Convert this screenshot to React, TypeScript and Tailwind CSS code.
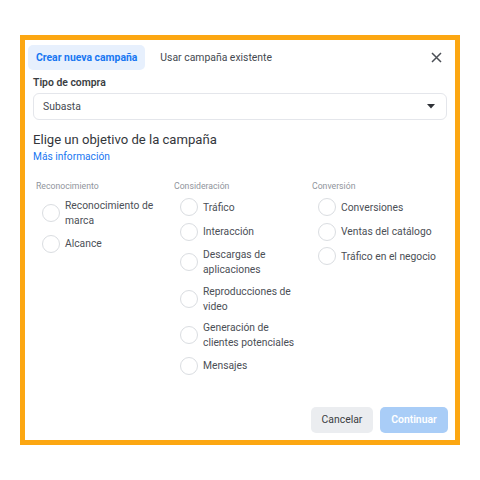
const COLUMNS = [
  {
    title: 'Reconocimiento',
    items: ['Reconocimiento de marca', 'Alcance'],
  },
  {
    title: 'Consideración',
    items: [
      'Tráfico',
      'Interacción',
      'Descargas de aplicaciones',
      'Reproducciones de video',
      'Generación de clientes potenciales',
      'Mensajes',
    ],
  },
  {
    title: 'Conversión',
    items: ['Conversiones', 'Ventas del catálogo', 'Tráfico en el negocio'],
  },
]

export default function App() {
  return (
    <div className="w-[480px] h-[480px] bg-white pt-[35px] pl-[20px]" style={{ fontFamily: 'Roboto, "Liberation Sans", sans-serif' }}>
      <div className="w-[440px] h-[410px] border-[5px] border-[#fca712] bg-white flex flex-col">
        {/* Tabs */}
        <div className="flex items-center pt-[5px] pl-[3px] pr-[12px]">
          <div className="h-[25px] px-[8px] flex items-center rounded-[5px] bg-[#e7f0fd] text-[#1877f2] text-[10.4px] font-bold">
            Crear nueva campaña
          </div>
          <div className="h-[25px] px-[8px] ml-[7px] flex items-center text-[#444950] text-[10.4px]">
            Usar campaña existente
          </div>
          <button className="ml-auto text-[#444] w-[14px] h-[14px] flex items-center justify-center">
            <svg width="11" height="11" viewBox="0 0 11 11" fill="none" stroke="#4b4f56" strokeWidth="1.5">
              <path d="M1 1l9 9M10 1l-9 9" />
            </svg>
          </button>
        </div>

        <div className="px-[8px] flex flex-col flex-1">
          <div className="mt-[6px] text-[10.4px] font-semibold text-[#3a3d42] leading-[14px]">Tipo de compra</div>
          <div className="mt-[3px] h-[27px] border border-[#e4e6eb] rounded-[6px] flex items-center pl-[9px] pr-[11px] text-[10.4px] text-[#444950]">
            Subasta
            <svg className="ml-auto" width="8" height="5" viewBox="0 0 8 5">
              <path d="M0 0h8L4 4.5z" fill="#2f3237" />
            </svg>
          </div>

          <div className="mt-[12px] text-[13.1px] text-[#33363b] leading-[16px]">Elige un objetivo de la campaña</div>
          <div className="mt-[2px] text-[10.2px] text-[#1877f2] leading-[14px]">Más información</div>

          <div className="mt-[16px] grid grid-cols-[138px_138px_138px] pl-[3px]">
            {COLUMNS.map(col => (
              <div key={col.title} className="flex flex-col">
                <div className="text-[8.7px] text-[#90949c] leading-[12px]">{col.title}</div>
                <div className="mt-[6px] flex flex-col gap-[6.5px]">
                  {col.items.map(item => (
                    <div key={item} className="flex items-center">
                      <span className="w-[18px] h-[18px] ml-[6px] shrink-0 rounded-full border border-[#dadde1] bg-white" />
                      <span className="ml-[5px] max-w-[96px] text-[10.3px] leading-[15px] text-[#4b4f56]">{item}</span>
                    </div>
                  ))}
                </div>
              </div>
            ))}
          </div>

          <div className="mt-auto mb-[7px] flex justify-end gap-[7px] -mr-[1px]">
            <button className="h-[26px] w-[62px] rounded-[5px] bg-[#ebedf0] text-[10.4px] text-[#3a3d42]">
              Cancelar
            </button>
            <button className="h-[26px] w-[68px] rounded-[5px] bg-[#a9cdf7] text-[10.4px] text-white font-semibold">
              Continuar
            </button>
          </div>
        </div>
      </div>
    </div>
  )
}
